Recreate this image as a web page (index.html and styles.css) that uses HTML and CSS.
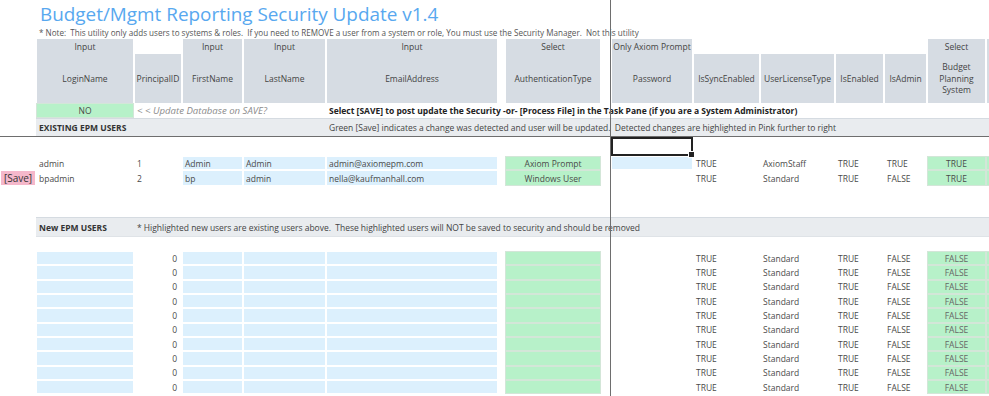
FILE: index.html
```html
<!DOCTYPE html>
<html lang="en">
<head>
    <meta charset="UTF-8">
    <title>Budget/Mgmt Reporting Security Update v1.4</title>
    <link rel="stylesheet" href="styles.css">
</head>
<body>
    <div class="sheet">
        <div class="row r-title">
            <div class="c title">Budget/Mgmt Reporting Security Update v1.4</div>
        </div>
        <div class="row r-note">
            <div class="c note">* Note:  This utility only adds users to systems &amp; roles.  If you need to REMOVE a user from a system or role, You must use the Security Manager.  Not this utility</div>
        </div>

        <!-- column headers -->
        <div class="row r-head1">
            <div class="c"></div>
            <div class="c hd">Input</div>
            <div class="c"></div>
            <div class="c hd">Input</div>
            <div class="c hd">Input</div>
            <div class="c hd">Input</div>
            <div class="c"></div>
            <div class="c hd">Select</div>
            <div class="c"></div>
            <div class="c hd">Only Axiom Prompt</div>
            <div class="c"></div>
            <div class="c"></div>
            <div class="c"></div>
            <div class="c"></div>
            <div class="c hd">Select</div>
            <div class="c hd"></div>
        </div>
        <div class="row r-head2">
            <div class="c"></div>
            <div class="c hd">LoginName</div>
            <div class="c hd">PrincipalID</div>
            <div class="c hd">FirstName</div>
            <div class="c hd">LastName</div>
            <div class="c hd">EmailAddress</div>
            <div class="c"></div>
            <div class="c hd">AuthenticationType</div>
            <div class="c"></div>
            <div class="c hd">Password</div>
            <div class="c hd">IsSyncEnabled</div>
            <div class="c hd">UserLicenseType</div>
            <div class="c hd">IsEnabled</div>
            <div class="c hd">IsAdmin</div>
            <div class="c hd wrap">Budget<br>Planning<br>System</div>
            <div class="c hd"></div>
        </div>

        <div class="row r-save">
            <div class="c"></div>
            <div class="c green mid">NO</div>
            <div class="c hint">&lt; &lt; Update Database on SAVE?</div>
            <div class="c strong">Select [SAVE] to post update the Security -or- [Process File] in the Task Pane (if you are a System Administrator)</div>
        </div>

        <div class="row r-section r-existing">
            <div class="c"></div>
            <div class="c bar lead">EXISTING EPM USERS</div>
            <div class="c bar tail">Green [Save] indicates a change was detected and user will be updated.  Detected changes are highlighted in Pink further to right</div>
        </div>

        <div class="row r-gap">
            <div class="c"></div>
            <div class="c"></div>
            <div class="c"></div>
            <div class="c"></div>
            <div class="c"></div>
            <div class="c"></div>
            <div class="c"></div>
            <div class="c"></div>
            <div class="c"></div>
            <div class="c sel"><span class="selected"></span></div>
        </div>

        <!-- existing users -->
        <div class="row r-data">
            <div class="c"></div>
            <div class="c">admin</div>
            <div class="c">1</div>
            <div class="c blue">Admin</div>
            <div class="c blue">Admin</div>
            <div class="c blue">admin@axiomepm.com</div>
            <div class="c"></div>
            <div class="c green mid">Axiom Prompt</div>
            <div class="c"></div>
            <div class="c blue"></div>
            <div class="c">TRUE</div>
            <div class="c">AxiomStaff</div>
            <div class="c">TRUE</div>
            <div class="c">TRUE</div>
            <div class="c green mid">TRUE</div>
            <div class="c green"></div>
        </div>
        <div class="row r-data">
            <div class="c pink mid">[Save]</div>
            <div class="c">bpadmin</div>
            <div class="c">2</div>
            <div class="c blue">bp</div>
            <div class="c blue">admin</div>
            <div class="c blue">nella@kaufmanhall.com</div>
            <div class="c"></div>
            <div class="c green mid">Windows User</div>
            <div class="c"></div>
            <div class="c"></div>
            <div class="c">TRUE</div>
            <div class="c">Standard</div>
            <div class="c">TRUE</div>
            <div class="c">FALSE</div>
            <div class="c green mid">TRUE</div>
            <div class="c green"></div>
        </div>

        <div class="row r-spacer"></div>

        <div class="row r-section r-new">
            <div class="c"></div>
            <div class="c bar lead">New EPM USERS</div>
            <div class="c bar tail">* Highlighted new users are existing users above.  These highlighted users will NOT be saved to security and should be removed</div>
        </div>

        <div class="row r-blank"></div>

        <!-- new users -->
        <div class="row r-data r-new-user">
            <div class="c"></div><div class="c blue"></div><div class="c num">0</div><div class="c blue"></div><div class="c blue"></div><div class="c blue"></div><div class="c"></div><div class="c green"></div><div class="c"></div><div class="c"></div>
            <div class="c">TRUE</div><div class="c">Standard</div><div class="c">TRUE</div><div class="c">FALSE</div><div class="c green mid soft">FALSE</div><div class="c green"></div>
        </div>
        <div class="row r-data r-new-user">
            <div class="c"></div><div class="c blue"></div><div class="c num">0</div><div class="c blue"></div><div class="c blue"></div><div class="c blue"></div><div class="c"></div><div class="c green"></div><div class="c"></div><div class="c"></div>
            <div class="c">TRUE</div><div class="c">Standard</div><div class="c">TRUE</div><div class="c">FALSE</div><div class="c green mid soft">FALSE</div><div class="c green"></div>
        </div>
        <div class="row r-data r-new-user">
            <div class="c"></div><div class="c blue"></div><div class="c num">0</div><div class="c blue"></div><div class="c blue"></div><div class="c blue"></div><div class="c"></div><div class="c green"></div><div class="c"></div><div class="c"></div>
            <div class="c">TRUE</div><div class="c">Standard</div><div class="c">TRUE</div><div class="c">FALSE</div><div class="c green mid soft">FALSE</div><div class="c green"></div>
        </div>
        <div class="row r-data r-new-user">
            <div class="c"></div><div class="c blue"></div><div class="c num">0</div><div class="c blue"></div><div class="c blue"></div><div class="c blue"></div><div class="c"></div><div class="c green"></div><div class="c"></div><div class="c"></div>
            <div class="c">TRUE</div><div class="c">Standard</div><div class="c">TRUE</div><div class="c">FALSE</div><div class="c green mid soft">FALSE</div><div class="c green"></div>
        </div>
        <div class="row r-data r-new-user">
            <div class="c"></div><div class="c blue"></div><div class="c num">0</div><div class="c blue"></div><div class="c blue"></div><div class="c blue"></div><div class="c"></div><div class="c green"></div><div class="c"></div><div class="c"></div>
            <div class="c">TRUE</div><div class="c">Standard</div><div class="c">TRUE</div><div class="c">FALSE</div><div class="c green mid soft">FALSE</div><div class="c green"></div>
        </div>
        <div class="row r-data r-new-user">
            <div class="c"></div><div class="c blue"></div><div class="c num">0</div><div class="c blue"></div><div class="c blue"></div><div class="c blue"></div><div class="c"></div><div class="c green"></div><div class="c"></div><div class="c"></div>
            <div class="c">TRUE</div><div class="c">Standard</div><div class="c">TRUE</div><div class="c">FALSE</div><div class="c green mid soft">FALSE</div><div class="c green"></div>
        </div>
        <div class="row r-data r-new-user">
            <div class="c"></div><div class="c blue"></div><div class="c num">0</div><div class="c blue"></div><div class="c blue"></div><div class="c blue"></div><div class="c"></div><div class="c green"></div><div class="c"></div><div class="c"></div>
            <div class="c">TRUE</div><div class="c">Standard</div><div class="c">TRUE</div><div class="c">FALSE</div><div class="c green mid soft">FALSE</div><div class="c green"></div>
        </div>
        <div class="row r-data r-new-user">
            <div class="c"></div><div class="c blue"></div><div class="c num">0</div><div class="c blue"></div><div class="c blue"></div><div class="c blue"></div><div class="c"></div><div class="c green"></div><div class="c"></div><div class="c"></div>
            <div class="c">TRUE</div><div class="c">Standard</div><div class="c">TRUE</div><div class="c">FALSE</div><div class="c green mid soft">FALSE</div><div class="c green"></div>
        </div>
        <div class="row r-data r-new-user">
            <div class="c"></div><div class="c blue"></div><div class="c num">0</div><div class="c blue"></div><div class="c blue"></div><div class="c blue"></div><div class="c"></div><div class="c green"></div><div class="c"></div><div class="c"></div>
            <div class="c">TRUE</div><div class="c">Standard</div><div class="c">TRUE</div><div class="c">FALSE</div><div class="c green mid soft">FALSE</div><div class="c green"></div>
        </div>
        <div class="row r-data r-new-user">
            <div class="c"></div><div class="c blue"></div><div class="c num">0</div><div class="c blue"></div><div class="c blue"></div><div class="c blue"></div><div class="c"></div><div class="c green"></div><div class="c"></div><div class="c"></div>
            <div class="c">TRUE</div><div class="c">Standard</div><div class="c">TRUE</div><div class="c">FALSE</div><div class="c green mid soft">FALSE</div><div class="c green"></div>
        </div>
    </div>

    <!-- frozen pane divider -->
    <div class="freeze-v"></div>
</body>
</html>
```

FILE: styles.css
```css
* {
    margin: 0;
    padding: 0;
    box-sizing: border-box;
}

body {
    font-family: "Open Sans", "Noto Sans", sans-serif;
    font-size: 8.5px;
    color: #4a4a4a;
    background: #fff;
    width: 989px;
    height: 396px;
    overflow: hidden;
    position: relative;
}

.sheet {
    display: flex;
    flex-direction: column;
}

.row {
    display: grid;
    grid-template-columns: 36px 98px 48px 61px 83px 172px 7px 96px 10px 82px 67px 75px 49px 43px 59px 40px;
}

.c {
    display: flex;
    align-items: center;
    padding: 0 2px;
    border: 1px solid transparent;
    white-space: nowrap;
    min-width: 0;
}

.mid {
    justify-content: center;
}

.num {
    justify-content: flex-end;
    padding-right: 4px;
}

/* title rows */
.r-title {
    height: 25px;
}

.title {
    grid-column: 2 / -1;
    padding-left: 3px;
    font-size: 18.9px;
    color: #58a8ef;
}

.r-note {
    height: 14px;
}

.note {
    grid-column: 2 / -1;
    white-space: pre;
    font-size: 8.1px;
    color: #555;
}

/* headers */
.r-head1 {
    height: 15px;
}

.r-head2 {
    height: 49px;
}

.hd {
    justify-content: center;
    text-align: center;
    background: #d6dce3;
    border-color: #fff;
    border-top: 0;
    border-bottom: 0;
    color: #444;
}

.r-head1 .hd {
    align-items: flex-end;
    padding-bottom: 2px;
}

.wrap {
    white-space: normal;
    line-height: 11.7px;
}

/* save prompt row */
.r-save {
    height: 15px;
}

.hint {
    grid-column: 3 / 6;
    font-style: italic;
    color: #8c8c8c;
    font-size: 9.6px;
}

.strong {
    grid-column: 6 / -1;
    font-weight: 700;
    color: #222;
}

/* section bars */
.r-section .bar {
    background: #e9ecef;
    border: 0;
    border-top: 1px solid #d5dbe1;
    padding-left: 3px;
}

.r-existing {
    height: 19px;
    border-bottom: 1px solid #6e6e6e;
}

.r-existing .lead {
    grid-column: 2 / 6;
}

.r-existing .tail {
    grid-column: 6 / -1;
}

.r-new {
    height: 20px;
}

.r-new .bar {
    border-bottom: 1px solid #dfe3e7;
}

.r-new .tail {
    grid-column: 3 / -1;
}

.lead {
    font-weight: 700;
    color: #333;
}

.tail {
    color: #444;
    white-space: pre;
    letter-spacing: -0.02px;
}

.r-gap {
    height: 19px;
}

.sel {
    padding: 0;
    border: 0;
}

.selected {
    position: relative;
    display: block;
    width: 100%;
    height: 100%;
    border: 2px solid #222;
}

.selected::after {
    content: "";
    position: absolute;
    right: -4px;
    bottom: -4px;
    width: 5px;
    height: 5px;
    background: #222;
    border: 1px solid #fff;
}

/* data rows */
.r-data {
    height: 14px;
}

.r-new-user {
    height: 14.33px;
}

.r-spacer {
    height: 33px;
}

.r-blank {
    height: 14px;
}

.blue {
    background: #dcf0fd;
    border-color: #fff;
}

.green {
    background: #b7f1c9;
    border-color: #d3e6d8;
}

.pink {
    background: #f5b8cb;
    color: #333;
    border-color: #fff;
    font-size: 10px;
    padding: 0;
}

.soft {
    color: #666;
}

.freeze-v {
    position: absolute;
    left: 610px;
    top: 0;
    bottom: 0;
    width: 1px;
    background: #6e6e6e;
}
```
